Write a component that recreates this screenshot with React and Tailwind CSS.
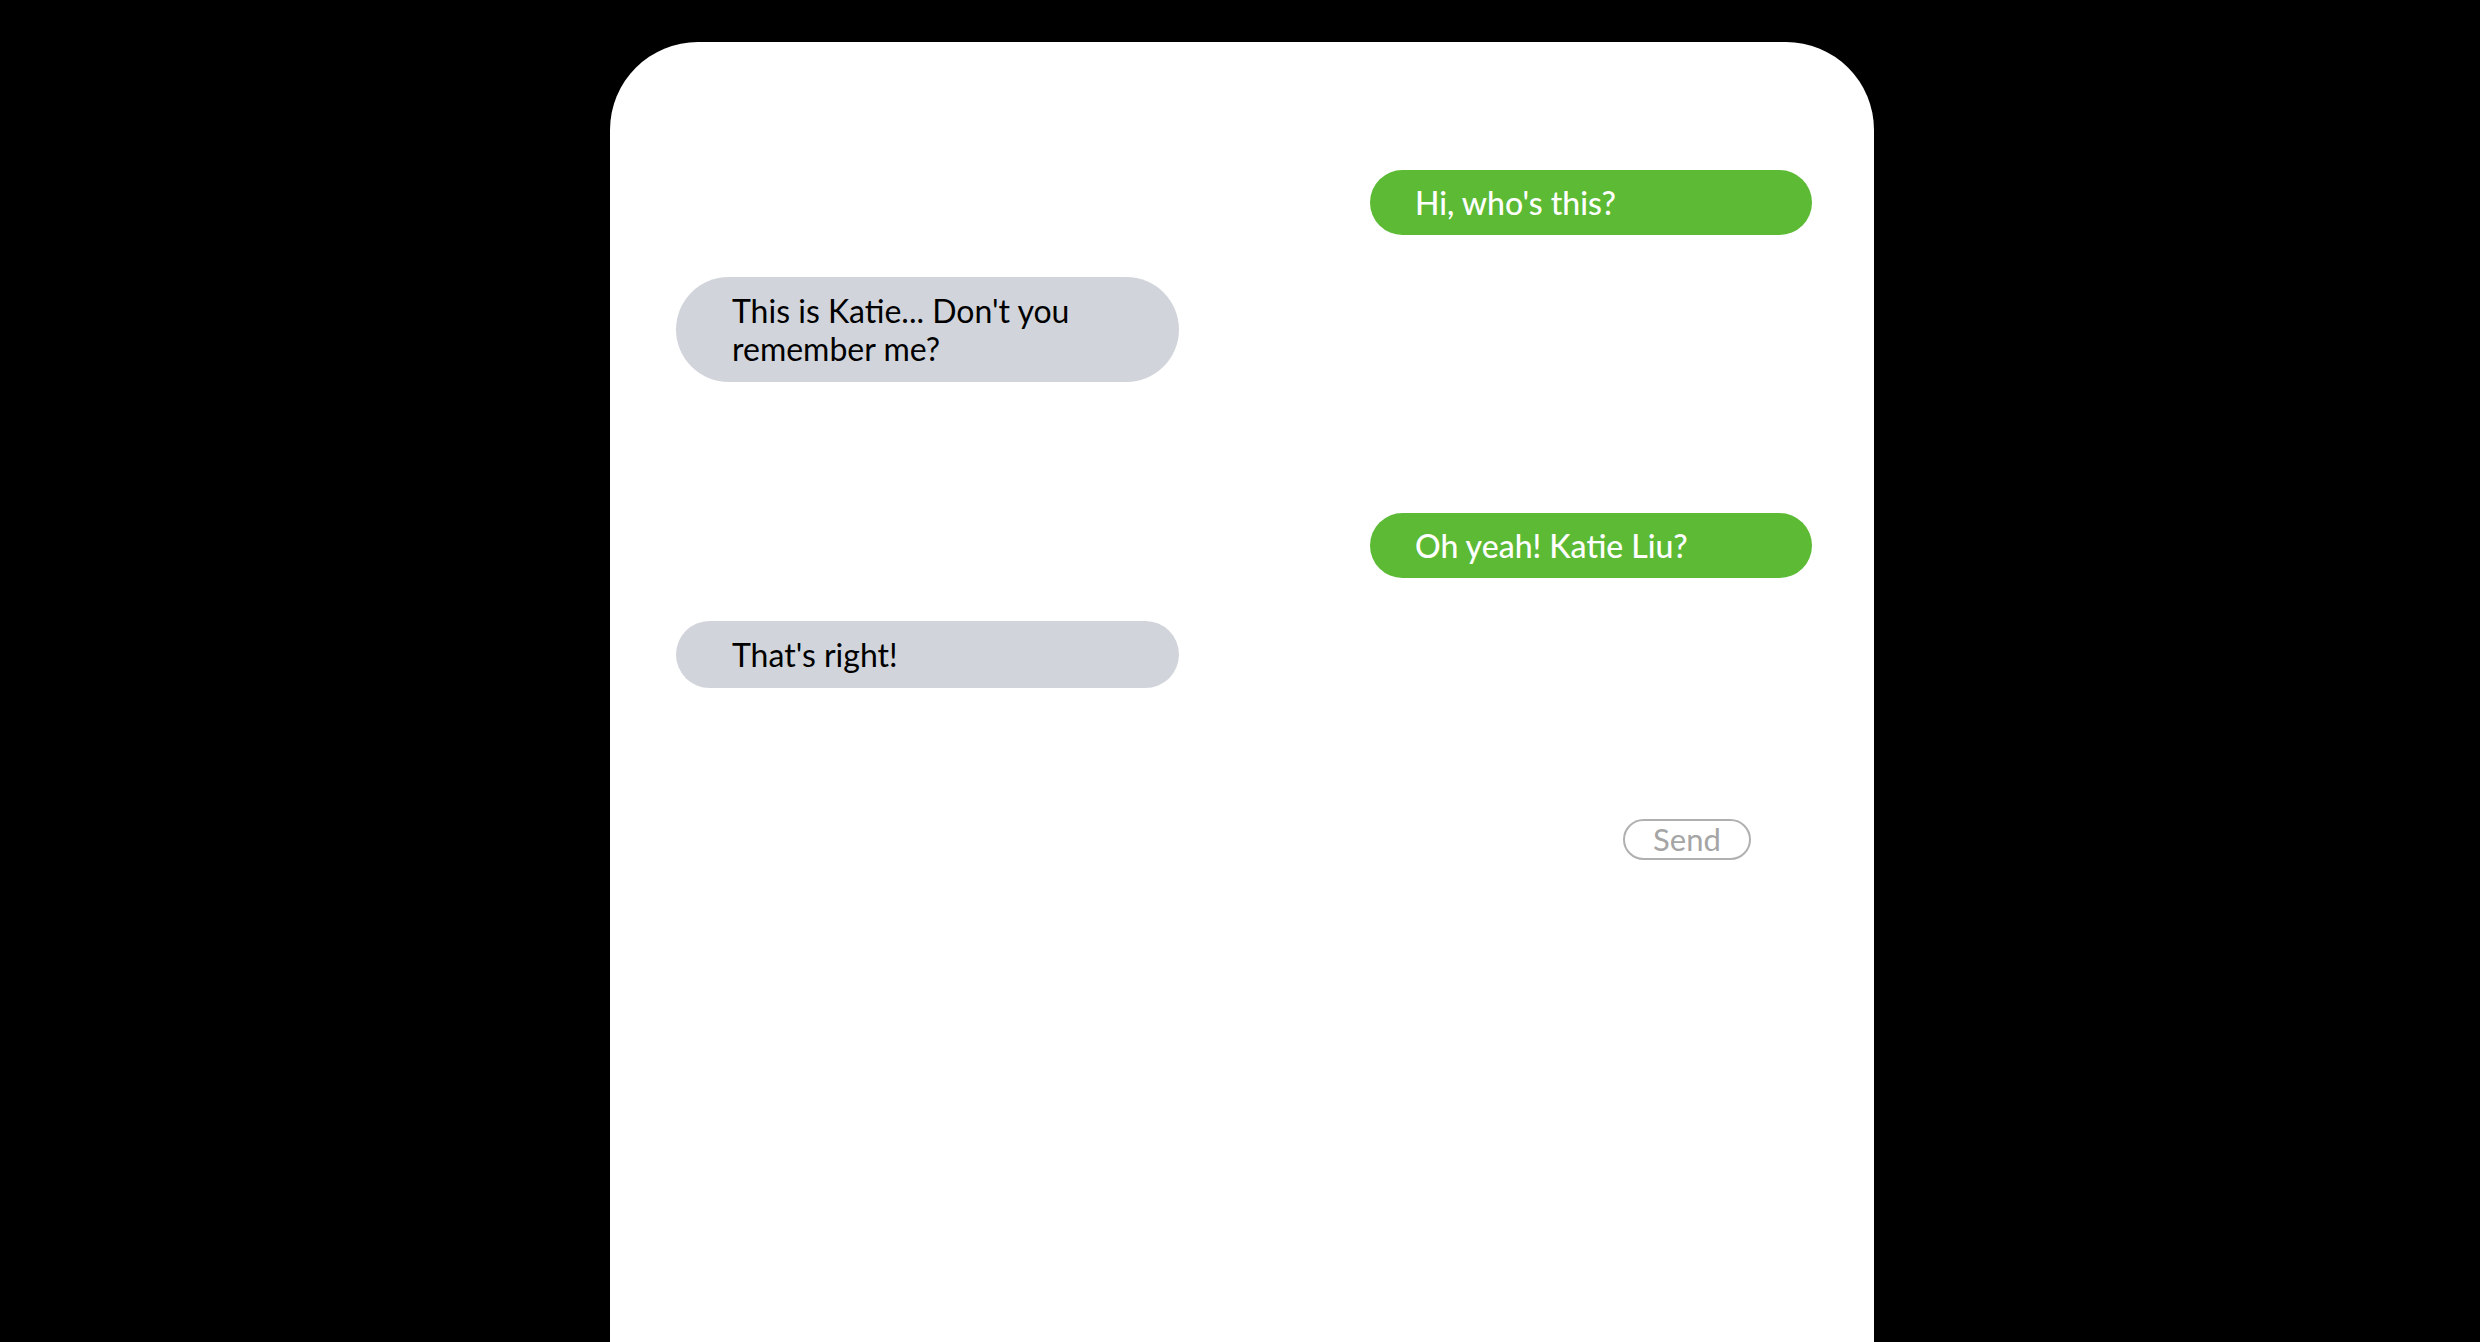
import React from 'react';

const messages = [
  { id: 1, from: 'me', text: "Hi, who's this?" },
  { id: 2, from: 'them', text: "This is Katie... Don't you remember me?" },
  { id: 3, from: 'me', text: 'Oh yeah! Katie Liu?' },
  { id: 4, from: 'them', text: "That's right!" },
];

const Bubble = ({ from, text, className }) => {
  if (from === 'me') {
    return (
      <div
        className={`self-end w-[442px] rounded-full bg-[#5cba34] pl-[45px] pr-[40px] py-[14px] text-[32px] leading-[37px] font-medium text-white ${className}`}
      >
        {text}
      </div>
    );
  }
  return (
    <div
      className={`self-start w-[503px] rounded-full bg-[#d1d5db] pl-[56px] pr-[56px] py-[14.5px] text-[32px] leading-[38px] text-black ${className}`}
    >
      {text}
    </div>
  );
};

export default function App() {
  return (
    <div
      className="h-screen w-full overflow-hidden bg-black pl-[610px] pt-[42px]"
      style={{ fontFamily: 'Lato, "Open Sans", sans-serif' }}
    >
      <div className="flex h-[1300px] w-[1264px] flex-col rounded-t-[88px] bg-white pl-[66px] pr-[62px] pt-[128px]">
        {/* conversation */}
        <Bubble {...messages[0]} />
        <Bubble {...messages[1]} className="mt-[42px]" />
        <Bubble {...messages[2]} className="mt-[131px]" />
        <Bubble {...messages[3]} className="mt-[43px]" />

        <button
          type="button"
          className="mt-[131px] mr-[61px] self-end flex h-[41px] w-[128px] items-center justify-center rounded-full border-2 border-[#b0b0b0] text-[31px] text-[#a5a5a5]"
        >
          Send
        </button>
      </div>
    </div>
  );
}
